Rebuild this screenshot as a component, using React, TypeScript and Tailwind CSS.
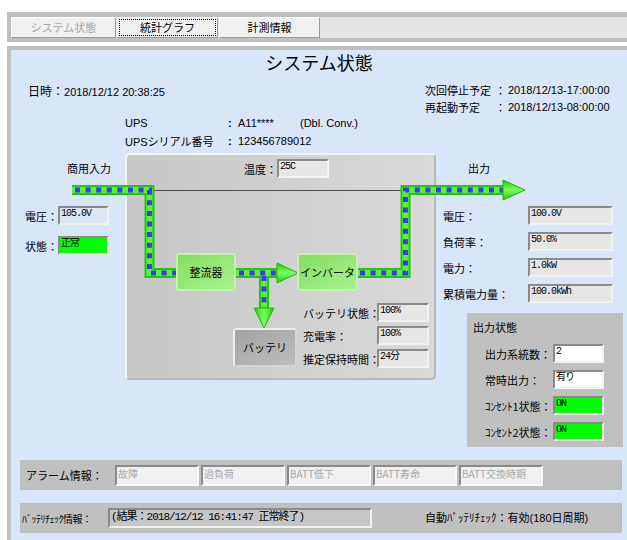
import React from "react";

const jp = "font-['Noto_Sans_CJK_JP',sans-serif]";
const ar = "font-['Liberation_Sans','Noto_Sans_CJK_JP',sans-serif]";
const mono = "font-['Liberation_Mono','Noto_Sans_CJK_JP',monospace]";

function Box({
  className,
  children,
}: {
  className: string;
  children?: React.ReactNode;
}) {
  return (
    <div
      className={`border-2 border-t-[#8a8a8a] border-l-[#8a8a8a] border-b-[#f2f2f2] border-r-[#f2f2f2] ${mono} text-[10px] tracking-[-1px] leading-[12px] pl-px overflow-hidden whitespace-nowrap text-black ${className}`}
    >
      {children}
    </div>
  );
}

function Lbl({
  className = "",
  children,
}: {
  className?: string;
  children: React.ReactNode;
}) {
  return (
    <div
      className={`${jp} text-[11px] leading-[16px] whitespace-nowrap text-black ${className}`}
    >
      {children}
    </div>
  );
}

function Tabs() {
  return (
    <div className="ml-[7px] mt-[12px] h-[30px] bg-[#c0c0c0] pt-[5px] pb-[4px] pl-[4px]">
      <div className="flex h-[21px] bg-[#e4e4e4]">
        <div
          className={`w-[105px] h-full bg-[#f0f0f0] border border-t-white border-l-white border-r-[#9a9a9a] border-b-[#9a9a9a] flex items-center justify-center ${jp} text-[11px] text-[#a8a8a8]`}
        >
          システム状態
        </div>
        <div className="ml-px w-[101px] h-full bg-[#f0f0f0] border border-t-white border-l-white border-r-[#9a9a9a] border-b-[#9a9a9a] p-[1px]">
          <div
            className={`w-full h-full border border-dotted border-black flex items-center justify-center ${jp} text-[11px] text-black`}
          >
            統計グラフ
          </div>
        </div>
        <div
          className={`ml-px w-[101px] h-full bg-[#f0f0f0] border border-t-white border-l-white border-r-[#9a9a9a] border-b-[#9a9a9a] flex items-center justify-center ${jp} text-[11px] text-black`}
        >
          計測情報
        </div>
      </div>
    </div>
  );
}

function Header() {
  return (
    <div className="h-[100px]">
      <div
        className={`text-center ${jp} text-[18px] leading-[24px] text-black`}
      >
        システム状態
      </div>
      <div className="mt-[8px] flex">
        <div className="w-[414px] pl-[17px] leading-[17px] whitespace-nowrap">
          <span className={`${jp} text-[12px]`}>日時：</span>
          <span className={`${ar} text-[11px]`}>2018/12/12 20:38:25</span>
        </div>
        <div className="leading-[17px] whitespace-nowrap">
          <div className="flex">
            <span className={`${jp} text-[11px] w-[70px]`}>次回停止予定</span>
            <span className={`${jp} text-[11px] w-[13px]`}>：</span>
            <span className={`${ar} text-[11px]`}>2018/12/13-17:00:00</span>
          </div>
          <div className="flex">
            <span className={`${jp} text-[11px] w-[70px]`}>再起動予定</span>
            <span className={`${jp} text-[11px] w-[13px]`}>：</span>
            <span className={`${ar} text-[11px]`}>2018/12/13-08:00:00</span>
          </div>
        </div>
      </div>
      <div className="-mt-[2px] pl-[114px] leading-[18px] whitespace-nowrap">
        <div className="flex">
          <span className={`${ar} text-[11px] w-[103px]`}>UPS</span>
          <span className={`${ar} text-[11px] font-bold w-[10px]`}>:</span>
          <span className={`${ar} text-[11px] w-[62px]`}>A11****</span>
          <span className={`${ar} text-[11px]`}>(Dbl. Conv.)</span>
        </div>
        <div className="flex">
          <span className={`${jp} text-[11px] w-[103px]`}>
            <span className={ar}>UPS</span>シリアル番号
          </span>
          <span className={`${ar} text-[11px] font-bold w-[10px]`}>:</span>
          <span className={`${ar} text-[11px]`}>123456789012</span>
        </div>
      </div>
    </div>
  );
}

function Pipes() {
  const paths = [
    "M61 40 H138.5 V123 H166",
    "M225 123 H267",
    "M253 123 V159",
    "M346 123 H394.5 V40 H493",
  ];
  return (
    <svg
      className="absolute left-0 top-0 w-[616px] h-[300px] pointer-events-none"
      viewBox="0 0 616 300"
    >
      <defs>
        <linearGradient id="ah" x1="0" y1="0" x2="0" y2="1">
          <stop offset="0" stopColor="#1fc80c" />
          <stop offset="0.5" stopColor="#7dff5c" />
          <stop offset="1" stopColor="#1fc80c" />
        </linearGradient>
        <linearGradient id="av" x1="0" y1="0" x2="1" y2="0">
          <stop offset="0" stopColor="#1fc80c" />
          <stop offset="0.5" stopColor="#7dff5c" />
          <stop offset="1" stopColor="#1fc80c" />
        </linearGradient>
      </defs>
      <line x1="139" y1="40.5" x2="395" y2="40.5" stroke="#4a4a4a" strokeWidth={1} />
      <g fill="none" strokeLinejoin="miter">
        {paths.map((d, i) => (
          <path key={"o" + i} d={d} stroke="#22c611" strokeWidth={10} />
        ))}
        {paths.map((d, i) => (
          <path key={"i" + i} d={d} stroke="#5cf03a" strokeWidth={6} />
        ))}
        {paths.map((d, i) => (
          <path
            key={"d" + i}
            d={d}
            stroke="#3a3af2"
            strokeWidth={5}
            strokeDasharray="5 5.6"
            strokeDashoffset={-3}
          />
        ))}
      </g>
      <polygon
        points="266,113 287,123 266,133"
        fill="url(#ah)"
        stroke="#1cb80c"
        strokeWidth={1}
      />
      <polygon
        points="243,158 263,158 253,178"
        fill="url(#av)"
        stroke="#1cb80c"
        strokeWidth={1}
      />
      <polygon
        points="492,30 514,40 492,50"
        fill="url(#ah)"
        stroke="#1cb80c"
        strokeWidth={1}
      />
    </svg>
  );
}

function Diagram() {
  const outs = [
    { l: "電圧：", v: "100.0V" },
    { l: "負荷率：", v: "50.0%" },
    { l: "電力：", v: "1.0kW" },
    { l: "累積電力量：", v: "100.0kWh" },
  ];
  const batt = [
    { l: "バッテリ状態：", v: "100%" },
    { l: "充電率：", v: "100%" },
    { l: "推定保持時間：", v: "24分" },
  ];
  const status = [
    { l: "出力系統数：", v: "2", bg: "bg-white" },
    { l: "常時出力：", v: "有り", bg: "bg-white" },
    { l: "ｺﾝｾﾝﾄ1状態：", v: "ON", bg: "bg-[#00ff00]" },
    { l: "ｺﾝｾﾝﾄ2状態：", v: "ON", bg: "bg-[#00ff00]" },
  ];
  return (
    <div className="relative flex h-[300px]">
      {/* left: input side */}
      <div className="w-[114px] pl-[14px] pt-[10px] flex flex-col">
        <Lbl className="ml-[42px]">商用入力</Lbl>
        <div className="mt-[30px] flex flex-col gap-[11px]">
          <div className="flex items-center h-[19px]">
            <Lbl className="w-[33px]">電圧：</Lbl>
            <Box className="w-[51px] h-[19px] bg-[#dde6f5]">105.0V</Box>
          </div>
          <div className="flex items-center h-[19px]">
            <Lbl className="w-[33px]">状態：</Lbl>
            <Box className="w-[51px] h-[19px] bg-[#00ff00]">正常</Box>
          </div>
        </div>
      </div>

      {/* center: UPS panel */}
      <div className="mt-[3px] w-[311px] h-[227px] rounded-[5px] border-2 border-t-[#f4f4f4] border-l-[#f4f4f4] border-r-[#b8b8b8] border-b-[#b8b8b8] bg-linear-to-r from-[#c7c7c7] to-[#d9d9d9] flex flex-col">
        <div className="mt-[4px] ml-[117px] flex items-center h-[19px]">
          <Lbl className="w-[33px]">温度：</Lbl>
          <Box className="w-[52px] h-[19px] bg-[#e6e6e6]">25C</Box>
        </div>
        <div className="mt-auto mb-[10px] ml-[176px] grid grid-cols-[74px_52px] gap-y-[4px] items-center">
          {batt.map((b) => (
            <React.Fragment key={b.l}>
              <Lbl>{b.l}</Lbl>
              <Box className="w-[52px] h-[19px] bg-[#e6e6e6]">{b.v}</Box>
            </React.Fragment>
          ))}
        </div>
      </div>

      {/* right: output side */}
      <div className="w-[191px] pt-[10px] flex flex-col">
        <Lbl className="ml-[32px]">出力</Lbl>
        <div className="mt-[30px] ml-[7px] flex flex-col gap-[7px]">
          {outs.map((o) => (
            <div key={o.l} className="flex items-center h-[19px]">
              <Lbl className="w-[85px]">{o.l}</Lbl>
              <Box className="w-[85px] h-[19px] bg-[#e6e6e6]">{o.v}</Box>
            </div>
          ))}
        </div>
        <div className="mt-[10px] ml-[31px] w-[156px] h-[134px] bg-[#c0c0c0]">
          <Lbl className="pl-[6px] pt-[6px]">出力状態</Lbl>
          <div className="mt-[9px] flex flex-col gap-[7px]">
            {status.map((r) => (
              <div key={r.l} className="flex items-center h-[19px]">
                <Lbl className="ml-[18px] w-[68px]">{r.l}</Lbl>
                <Box className={`w-[51px] h-[19px] ${r.bg}`}>{r.v}</Box>
              </div>
            ))}
          </div>
        </div>
      </div>

      {/* flow diagram overlay */}
      <Pipes />
      <div
        className={`absolute left-[165px] top-[103px] w-[60px] h-[38px] rounded-[3px] border-2 border-[#c6f0b4] bg-linear-to-br from-[#82dd62] to-[#a9f38e] flex items-center justify-center ${jp} text-[11px] text-black`}
      >
        整流器
      </div>
      <div
        className={`absolute left-[286px] top-[103px] w-[61px] h-[38px] rounded-[3px] border-2 border-[#c6f0b4] bg-linear-to-br from-[#82dd62] to-[#a9f38e] flex items-center justify-center ${jp} text-[11px] text-black`}
      >
        インバータ
      </div>
      <div
        className={`absolute left-[222px] top-[178px] w-[64px] h-[39px] rounded-[3px] border-2 border-t-[#eeeeee] border-l-[#eeeeee] border-r-[#d4d4d4] border-b-[#d4d4d4] bg-linear-to-br from-[#a3a3a3] to-[#bdbdbd] flex items-center justify-center ${jp} text-[11px] text-black`}
      >
        バッテリ
      </div>
    </div>
  );
}

function AlarmBar() {
  const items = ["故障", "過負荷", "BATT低下", "BATT寿命", "BATT交換時期"];
  return (
    <div className="ml-[9px] mt-[10px] w-[602px] h-[30px] bg-[#c0c0c0] flex items-center">
      <div
        className={`pl-[6px] w-[95px] ${jp} text-[11px] text-black whitespace-nowrap`}
      >
        アラーム情報：
      </div>
      <div className="flex gap-[2px]">
        {items.map((t) => (
          <div
            key={t}
            className={`w-[84px] h-[21px] bg-[#f0f0f0] border-2 border-t-[#8a8a8a] border-l-[#8a8a8a] border-b-[#f8f8f8] border-r-[#f8f8f8] pl-px ${jp} text-[10px] leading-[14px] text-[#a8a8a8] whitespace-nowrap overflow-hidden`}
          >
            {t}
          </div>
        ))}
      </div>
    </div>
  );
}

function CheckBar() {
  return (
    <div className="ml-[9px] mt-[13px] w-[602px] h-[30px] bg-[#c0c0c0] flex items-center">
      <div
        className={`pl-[2px] w-[88px] ${jp} text-[10px] text-black whitespace-nowrap tracking-[-0.5px]`}
      >
        ﾊﾞｯﾃﾘﾁｪｯｸ情報：
      </div>
      <Box className="w-[264px] h-[20px] bg-[#c6c6c6] text-[11px] tracking-[-0.6px] leading-[14px]">
        (結果：2018/12/12 16:41:47 正常終了)
      </Box>
      <div
        className={`ml-[53px] ${jp} text-[11px] text-black whitespace-nowrap`}
      >
        自動ﾊﾞｯﾃﾘﾁｪｯｸ：有効<span className={ar}>(180</span>日周期
        <span className={ar}>)</span>
      </div>
    </div>
  );
}

export default function App() {
  return (
    <div className="w-[627px] h-[540px] overflow-hidden bg-white">
      <Tabs />
      <div className="ml-[7px] mt-[4px] border-l-4 border-t-4 border-[#c0c0c0] bg-[#d9e5f8] pb-[7px]">
        <Header />
        <Diagram />
        <AlarmBar />
        <CheckBar />
      </div>
    </div>
  );
}
